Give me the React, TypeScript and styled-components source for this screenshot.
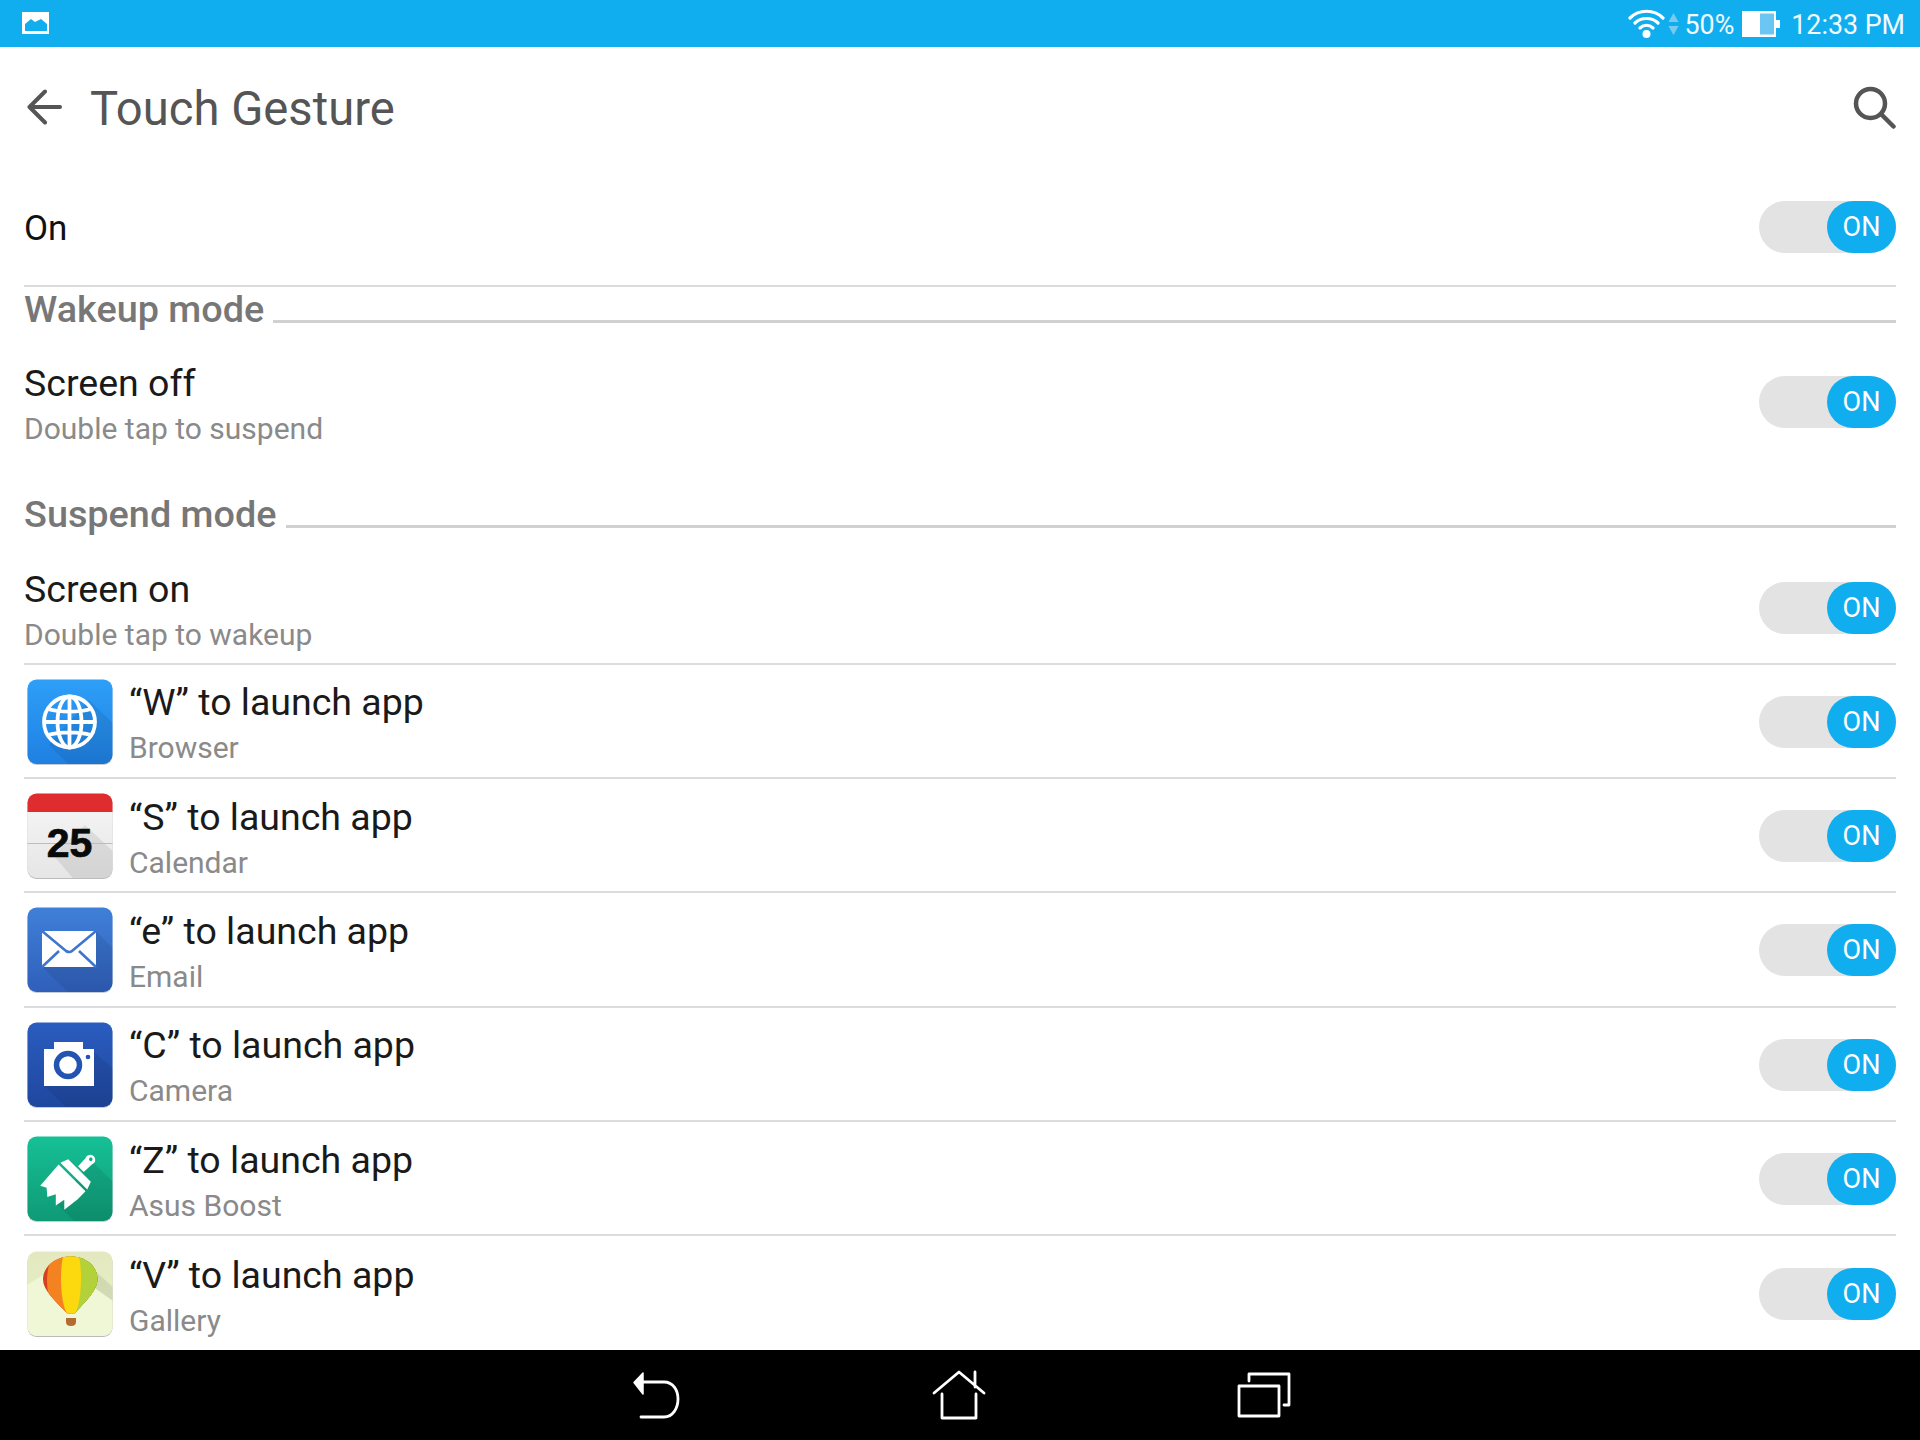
import React from 'react';
import styled, { createGlobalStyle } from 'styled-components';

const Global = createGlobalStyle`
  html, body { margin: 0; padding: 0; background: #fff; }
  * { box-sizing: border-box; }
`;
const Screen = styled.div`
  width: 1920px; height: 1440px; display: flex; flex-direction: column; overflow: hidden;
  background: #fff; font-family: Roboto, "Liberation Sans", sans-serif;
`;
const StatusBar = styled.div`
  height: 47px; background: #10aeef; display: flex; align-items: center; padding: 0 15px 0 22px; color: #fff; flex: none;
`;
const StatusRight = styled.div`
  margin-left: auto; display: flex; align-items: center;
`;
const StatusText = styled.span<{ $ml: number }>`
  font-size: 26.8px; line-height: 47px; padding-top: 3px; margin-left: ${p => p.$ml}px; color: #f2fbff;
`;
const Toolbar = styled.div`
  height: 123px; flex: none; display: flex; align-items: center; padding: 0 24px 0 27px;
`;
const BackWrap = styled.div`
  display: flex; margin-bottom: 3px;
`;
const Title = styled.h1`
  margin: 0 0 0 28px; font-size: 47.2px; font-weight: 400; color: #555; line-height: 56px;
`;
const SearchWrap = styled.div`
  margin-left: auto; display: flex; margin-bottom: 2px;
`;
const List = styled.div`
  flex: 1; padding: 0 24px; display: flex; flex-direction: column; min-height: 0;
`;
const Row = styled.div<{ $h: number; $divider?: boolean; $mb?: number; $pb?: number; $pt?: number }>`
  height: ${p => p.$h}px; flex: none; display: flex; align-items: center;
  margin-bottom: ${p => p.$mb || 0}px;
  padding-top: ${p => p.$pt || 0}px;
  padding-bottom: ${p => p.$pb || 0}px;
  border-bottom: ${p => (p.$divider ? '2px solid #dcdcdc' : 'none')};
`;
const Plain = styled.span`
  font-size: 35px; color: #111; padding-top: 4px;
`;
const SectionHeader = styled.div`
  height: 58px; flex: none; display: flex; align-items: flex-start; gap: 9px;
`;
const SectionLabel = styled.span`
  font-size: 37.8px; font-weight: 500; color: #777; line-height: 45px; white-space: nowrap;
`;
const SectionLine = styled.div`
  flex: 1; height: 3px; background: #d0d0d0; margin-top: 33px;
`;
const Texts = styled.div`
  display: flex; flex-direction: column; padding-top: 8px;
`;
const RowTitle = styled.div`
  font-size: 37.5px; line-height: 44px; color: #1a1a1a; white-space: nowrap;
`;
const RowSub = styled.div`
  font-size: 30px; line-height: 47px; color: #8a8a8a; white-space: nowrap;
`;
const IconBox = styled.div`
  width: 86px; height: 86px; margin: 0 16px 0 3px; flex: none; display: flex;
`;
const Track = styled.div`
  margin-left: auto; width: 137px; height: 52px; border-radius: 26px; background: #e3e3e3;
  display: flex; justify-content: flex-end; flex: none;
`;
const Thumb = styled.div`
  width: 69px; height: 52px; border-radius: 26px; background: #10aeef; color: #fff;
  font-size: 27px; display: flex; align-items: center; justify-content: center;
`;
const NavBar = styled.div`
  height: 90px; flex: none; background: #000; display: flex; align-items: center; gap: 251px; padding: 0 0 0 631px;
`;

const Toggle = () => <Track><Thumb>ON</Thumb></Track>;

const Frame = ({ id, c1, c2, children, shadow, border }: { id: string; c1: string; c2: string; children: React.ReactNode; shadow?: string; border?: string }) => (
  <svg width="86" height="86" viewBox="0 0 86 86">
    <defs>
      <linearGradient id={id} x1="0" y1="0" x2="0" y2="1">
        <stop offset="0" stopColor={c1} />
        <stop offset="1" stopColor={c2} />
      </linearGradient>
      <clipPath id={id + 'c'}><rect x="0.5" y="0.5" width="85" height="84.5" rx="9" /></clipPath>
    </defs>
    <rect x="0.5" y="1.5" width="85" height="84.5" rx="9" fill={border || '#c6ccd4'} />
    <rect x="0.5" y="0.5" width="85" height="84.5" rx="9" fill={`url(#${id})`} />
    <g clipPath={`url(#${id}c)`}>
      {shadow && <polygon points={shadow} fill="#000" opacity="0.08" />}
      {children}
    </g>
  </svg>
);

const Browser = () => (
  <Frame id="br" c1="#2e9ff8" c2="#1f80e2" shadow="22,66 62,21 90,48 90,90 46,90">
    <g fill="none" stroke="#fff" strokeWidth="3.800">
      <circle cx="42.5" cy="43" r="25.5" />
      <ellipse cx="42.5" cy="43" rx="12" ry="25.5" />
      <path d="M42.5 17.5v51M17 43h51M21 30c12 3.500 31 3.500 43 0M21 56c12-3.500 31-3.500 43 0" />
    </g>
  </Frame>
);
const Calendar = () => (
  <Frame id="ca" c1="#f6f6f6" c2="#e6e6e6" border="#bbb" shadow="26,62 58,32 90,62 90,90 50,90">
    <rect x="0" y="0" width="86" height="19" fill="#df2d2f" />
    <rect x="0" y="50" width="86" height="1" fill="#bdbdbd" />
    <text x="42.5" y="64" textAnchor="middle" fontFamily="'Liberation Sans', sans-serif" fontWeight="700" fontSize="41" stroke="#0a0a0a" strokeWidth="0.700" fill="#0a0a0a">25</text>
  </Frame>
);
const Email = () => (
  <Frame id="em" c1="#4080d8" c2="#2f5fbb" shadow="15,60 69,24 90,46 90,90 46,90">
    <rect x="15" y="24" width="54" height="36" fill="#fff" />
    <path d="M15 24l24 20q3.500 2 6 0l24-20M15 60l17-16M69 60L52 44" fill="none" stroke="#3e75cf" strokeWidth="2.600" />
  </Frame>
);
const Camera = () => (
  <Frame id="cm" c1="#2a5dbf" c2="#1f479f" shadow="17,64 67,30 90,50 90,90 44,90">
    <path d="M17 27h10v-7h29v7h11v37H17z" fill="#fff" />
    <circle cx="41" cy="43" r="11.500" fill="none" stroke="#2454b2" strokeWidth="5.500" />
    <circle cx="61" cy="35" r="2.300" fill="#2454b2" />
  </Frame>
);
const Boost = () => (
  <Frame id="bo" c1="#16c096" c2="#0f9a75" shadow="30,68 64,24 90,50 90,90 52,90">
    <g transform="rotate(45 44 43)" fill="#fff">
      <path d="M39.500 18a5 5 0 1 1 9 0l-.5 11h-8z" />
      <circle cx="44" cy="15" r="1.800" fill="#14ab86" />
      <path d="M28 31h32l3 8H25z" />
      <path d="M25 41.500h38v11l-2 17-7-7-2 10-8-8-4 8-7-6-6 3z" />
    </g>
  </Frame>
);
const Gallery = () => (
  <Frame id="ga" c1="#e4e8c0" c2="#e3f2c4" border="#bbb" shadow="20,60 66,18 90,40 90,90 48,90">
    <path d="M0 34l16-10 22 22 20-16 28 20v40H0z" fill="#eff7d6" />
    <defs>
      <clipPath id="blc"><path d="M43.500 5.500c15 0 27 9 27 23 0 10-11 21-23 34h-7C28 50 16 39 16 28.500 16 15 29 5.500 43.500 5.500z" /></clipPath>
    </defs>
    <g clipPath="url(#blc)">
      <rect x="10" y="0" width="70" height="70" fill="#d5401f" />
      <ellipse cx="47" cy="30" rx="27" ry="42" fill="#f58220" />
      <ellipse cx="60" cy="30" rx="20" ry="42" fill="#6fb92e" />
      <ellipse cx="55" cy="30" rx="19" ry="42" fill="#b3d138" />
      <ellipse cx="44" cy="28" rx="10" ry="38" fill="#fcd90e" />
    </g>
    <path d="M39 67h10v4q0 4-5 4t-5-4z" fill="#b56a30" />
  </Frame>
);

const apps = [
  { key: 'W', app: 'Browser', Icon: Browser },
  { key: 'S', app: 'Calendar', Icon: Calendar },
  { key: 'e', app: 'Email', Icon: Email },
  { key: 'C', app: 'Camera', Icon: Camera },
  { key: 'Z', app: 'Asus Boost', Icon: Boost },
  { key: 'V', app: 'Gallery', Icon: Gallery },
];

export default function App() {
  return (
    <Screen>
      <Global />
      <StatusBar>
        <svg width="28" height="23" viewBox="0 0 28 23">
          <rect width="27" height="22" fill="#fff" />
          <path d="M3 19V12l6-5 4 3 6-3 6 5v7z" fill="#10aeef" />
        </svg>
        <StatusRight>
          <svg width="37" height="31" viewBox="0 0 37 31">
            <g fill="none" stroke="#fff" strokeWidth="3.200" strokeLinecap="round">
              <path d="M2 10c9-9 24-9 33 0M7 15c6-6 17-6 23 0M12 20c4-3.500 9-3.500 13 0" />
            </g>
            <circle cx="18.500" cy="26" r="4" fill="#fff" />
          </svg>
          <svg width="11" height="24" viewBox="0 0 11 24" style={{ marginLeft: 3 }}>
            <path d="M5.500 1l5 9H.500zM.500 14h10l-5 9z" fill="#7cc9ef" />
          </svg>
          <StatusText $ml={6}>50%</StatusText>
          <svg width="38" height="26" viewBox="0 0 38 26" style={{ marginLeft: 8 }}>
            <rect x="0" y="0" width="34" height="26" fill="#fff" />
            <rect x="18" y="2.500" width="14" height="21" fill="#6cc6f3" />
            <rect x="34" y="9" width="4" height="8" fill="#fff" />
          </svg>
          <StatusText $ml={11}>12:33 PM</StatusText>
        </StatusRight>
      </StatusBar>
      <Toolbar>
        <BackWrap>
          <svg width="35" height="36" viewBox="0 0 35 36" fill="none" stroke="#555" strokeWidth="4" strokeLinecap="round" strokeLinejoin="round">
            <path d="M2.500 18H33M18 2.500L2.500 18 18 33.500" />
          </svg>
        </BackWrap>
        <Title>Touch Gesture</Title>
        <SearchWrap>
          <svg width="43" height="43" viewBox="0 0 43 43" fill="none" stroke="#555" strokeWidth="4.500" strokeLinecap="round">
            <circle cx="17.500" cy="17.500" r="14.500" />
            <path d="M28 28l12.500 12.500" />
          </svg>
        </SearchWrap>
      </Toolbar>
      <List>
        <Row $h={117} $divider $pb={2}>
          <Plain>On</Plain>
          <Toggle />
        </Row>
        <SectionHeader>
          <SectionLabel>Wakeup mode</SectionLabel>
          <SectionLine />
        </SectionHeader>
        <Row $h={114} $mb={33}>
          <Texts>
            <RowTitle>Screen off</RowTitle>
            <RowSub>Double tap to suspend</RowSub>
          </Texts>
          <Toggle />
        </Row>
        <SectionHeader>
          <SectionLabel>Suspend mode</SectionLabel>
          <SectionLine />
        </SectionHeader>
        <Row $h={114.7} $divider $pt={4}>
          <Texts>
            <RowTitle>Screen on</RowTitle>
            <RowSub>Double tap to wakeup</RowSub>
          </Texts>
          <Toggle />
        </Row>
        {apps.map(({ key, app, Icon }, i) => (
          <Row key={key} $h={114.3} $divider={i < apps.length - 1} $pt={2}>
            <IconBox><Icon /></IconBox>
            <Texts>
              <RowTitle>“{key}” to launch app</RowTitle>
              <RowSub>{app}</RowSub>
            </Texts>
            <Toggle />
          </Row>
        ))}
      </List>
      <NavBar>
        <svg width="50" height="48" viewBox="0 0 50 48" fill="none" stroke="#fff" strokeWidth="2.800" strokeLinecap="round">
          <path d="M12 11h21c9 0 14 8 14 17s-5 18-14 18H10" />
          <path d="M12 2L3 11.500 12 23z" fill="#fff" stroke="#fff" strokeWidth="1.500" strokeLinejoin="round" />
        </svg>
        <svg width="54" height="50" viewBox="0 0 54 50" fill="none" stroke="#fff" strokeWidth="2.800" strokeLinecap="round" strokeLinejoin="round">
          <path d="M2 23L27 2l25 21M43 2v15M10 24v24h34V24" />
        </svg>
        <svg width="54" height="46" viewBox="0 0 54 46" fill="none" stroke="#fff" strokeWidth="2.800" strokeLinecap="round" strokeLinejoin="round">
          <rect x="2" y="14" width="40" height="30" />
          <path d="M12 9V2h40v31h-5" />
        </svg>
      </NavBar>
    </Screen>
  );
}
